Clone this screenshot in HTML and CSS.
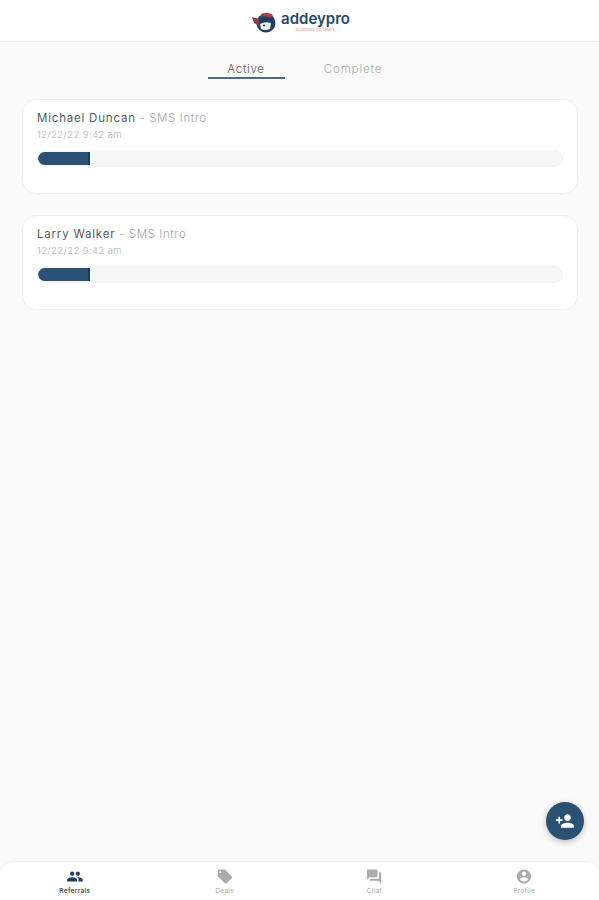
FILE: index.html
```html
<!DOCTYPE html>
<html lang="en">
<head>
<meta charset="utf-8">
<title>Referrals</title>
<link rel="stylesheet" href="styles.css">
</head>
<body>
<div class="app">
  <header class="topbar">
    <div class="logo">
      <svg class="logo-mark" viewBox="0 0 28 22" width="28" height="22" aria-hidden="true">
        <circle cx="15" cy="12" r="9.500" fill="#1f3f5f"/>
        <path d="M1 6 L8 8 L8 15 L3 12 Z" fill="#8e3a46"/>
        <path d="M10 3 Q16 0 22 4 L19 7 Q14 4 10 6 Z" fill="#a8404d"/>
        <path d="M9 13 Q14 10 20 12 L19 18 Q14 20 10 18 Z" fill="#eef1f3"/>
        <circle cx="13" cy="14.500" r="1" fill="#1f3f5f"/>
      </svg>
      <div class="logo-text">
        <span class="logo-name">addeypro</span>
        <span class="logo-sub">business software</span>
      </div>
    </div>
  </header>

  <nav class="tabs">
    <div class="tab tab-active">Active</div>
    <div class="tab">Complete</div>
  </nav>

  <main class="list">
    <article class="card">
      <div class="card-title"><span class="name">Michael Duncan</span> - SMS Intro</div>
      <div class="card-date">12/22/22 9:42 am</div>
      <div class="track"><div class="fill"></div></div>
    </article>
    <article class="card">
      <div class="card-title"><span class="name">Larry Walker</span> - SMS Intro</div>
      <div class="card-date">12/22/22 9:42 am</div>
      <div class="track"><div class="fill"></div></div>
    </article>
  </main>

  <button class="fab" aria-label="Add referral">
    <svg viewBox="0 0 24 24" width="20" height="20"><path fill="#fff" d="M15 12c2.210 0 4-1.790 4-4s-1.790-4-4-4-4 1.790-4 4 1.790 4 4 4zm-9-2V7H4v3H1v2h3v3h2v-3h3v-2H6zm9 4c-2.670 0-8 1.340-8 4v2h16v-2c0-2.660-5.330-4-8-4z"/></svg>
  </button>

  <footer class="bottomnav">
    <div class="navitem navitem-active">
      <svg viewBox="0 0 24 24" width="22" height="22"><path fill="currentColor" d="M16 11c1.660 0 2.990-1.340 2.990-3S17.660 5 16 5s-3 1.340-3 3 1.340 3 3 3zm-8 0c1.660 0 2.990-1.340 2.990-3S9.660 5 8 5 5 6.340 5 8s1.340 3 3 3zm0 2c-2.330 0-7 1.170-7 3.500V19h14v-2.500C15 14.170 10.330 13 8 13zm8 0c-.290 0-.620.020-.970.050 1.160.84 1.970 1.970 1.970 3.450V19h6v-2.500c0-2.330-4.670-3.500-7-3.500z"/></svg>
      <span>Referrals</span>
    </div>
    <div class="navitem">
      <svg viewBox="0 0 24 24" width="20" height="20"><path fill="currentColor" d="M21.410 11.580l-9-9C12.050 2.220 11.550 2 11 2H4c-1.100 0-2 .9-2 2v7c0 .55.220 1.050.59 1.420l9 9c.36.360.86.580 1.410.580.55 0 1.050-.220 1.410-.590l7-7c.370-.360.590-.860.590-1.410 0-.550-.230-1.060-.590-1.420zM5.500 7C4.670 7 4 6.330 4 5.500S4.670 4 5.500 4 7 4.670 7 5.500 6.330 7 5.500 7z"/></svg>
      <span>Deals</span>
    </div>
    <div class="navitem">
      <svg viewBox="0 0 24 24" width="20" height="20"><path fill="currentColor" d="M21 6h-2v9H6v2c0 .55.450 1 1 1h11l4 4V7c0-.55-.450-1-1-1zm-4 6V3c0-.55-.450-1-1-1H3c-.55 0-1 .45-1 1v14l4-4h10c.55 0 1-.45 1-1z"/></svg>
      <span>Chat</span>
    </div>
    <div class="navitem">
      <svg viewBox="0 0 24 24" width="20" height="20"><path fill="currentColor" d="M12 2C6.480 2 2 6.480 2 12s4.480 10 10 10 10-4.480 10-10S17.520 2 12 2zm0 3c1.660 0 3 1.340 3 3s-1.340 3-3 3-3-1.340-3-3 1.340-3 3-3zm0 14.200c-2.500 0-4.710-1.280-6-3.220.030-1.990 4-3.080 6-3.080 1.990 0 5.970 1.090 6 3.080-1.290 1.940-3.500 3.220-6 3.220z"/></svg>
      <span>Profile</span>
    </div>
  </footer>
</div>
</body>
</html>
```

FILE: styles.css
```css
* { box-sizing: border-box; }
html, body { margin: 0; padding: 0; height: 100%; }
body {
  font-family: "Inter", "Open Sans", sans-serif;
  background: #fafafa;
  color: #5d6066;
  overflow: hidden;
}
.app {
  position: relative;
  height: 900px;
  display: flex;
  flex-direction: column;
}
.topbar {
  height: 42px;
  flex: none;
  background: #fff;
  border-bottom: 1px solid #ececec;
  display: flex;
  align-items: center;
  justify-content: center;
}
.logo { display: flex; align-items: center; gap: 2px; margin: 2px 0 0 2px; }
.logo-mark { display: block; }
.logo-text { display: flex; flex-direction: column; align-items: center; }
.logo-name {
  font-size: 15px;
  line-height: 16px;
  font-weight: 600;
  color: #24476a;
}
.logo-sub {
  font-size: 4px;
  line-height: 5px;
  color: #e58b86;
  letter-spacing: 0.3px;
}
.tabs {
  flex: none;
  display: flex;
  justify-content: center;
  padding-top: 19px;
  height: 57px;
}
.tab {
  width: 77px;
  height: 18px;
  margin: 0 15px;
  text-align: center;
  font-size: 11.500px;
  line-height: 17px;
  font-weight: 300;
  color: #a9abad;
  letter-spacing: 0.9px;
}
.tab-active {
  color: #54585c;
  letter-spacing: 0.7px;
  border-bottom: 2px solid #4f6a85;
}
.list {
  flex: 1;
  padding: 0 21px 0 22px;
  display: flex;
  flex-direction: column;
  gap: 21px;
}
.card {
  height: 95px;
  background: #fff;
  border: 1px solid #f0f0f0;
  border-radius: 14px;
  padding: 11px 14px 0;
}
.card-title {
  font-size: 11.500px;
  line-height: 15px;
  font-weight: 300;
  color: #a4a6a8;
  letter-spacing: 0.6px;
}
.name { color: #55595d; font-weight: 400; letter-spacing: 0.8px; }
.card-date {
  margin-top: 3px;
  font-size: 9.500px;
  line-height: 12px;
  font-weight: 300;
  color: #b0b2b4;
  letter-spacing: 0.4px;
}
.track {
  margin-top: 9px;
  height: 17px;
  background: #f7f7f7;
  border: 1px solid #f3f3f3;
  border-radius: 9px;
  padding-top: 1px;
  overflow: hidden;
}
.fill {
  width: 52px;
  height: 13px;
  background: #2a5173;
  border-right: 2px solid #1a3c5c;
  border-radius: 7px 0 0 7px;
}
.fab {
  position: absolute;
  left: 546px;
  top: 802px;
  width: 38px;
  height: 38px;
  padding: 0;
  border: none;
  border-radius: 50%;
  background: #2a5173;
  box-shadow: 0 2px 6px rgba(0, 0, 0, 0.25);
  display: flex;
  align-items: center;
  justify-content: center;
}
.bottomnav {
  flex: none;
  height: 39px;
  background: #fff;
  border-top: 1px solid #efefef;
  border-radius: 14px 14px 0 0;
  display: grid;
  grid-template-columns: repeat(4, 1fr);
}
.navitem {
  display: flex;
  flex-direction: column;
  align-items: center;
  padding-top: 6px;
  color: #a9abad;
  font-size: 6.500px;
  line-height: 8px;
  letter-spacing: 0.3px;
}
.navitem svg { display: block; height: 17px; margin-bottom: 2px; }
.navitem-active { color: #1f3f66; }
.navitem-active span { color: #4a4f55; font-weight: 600; }
```
